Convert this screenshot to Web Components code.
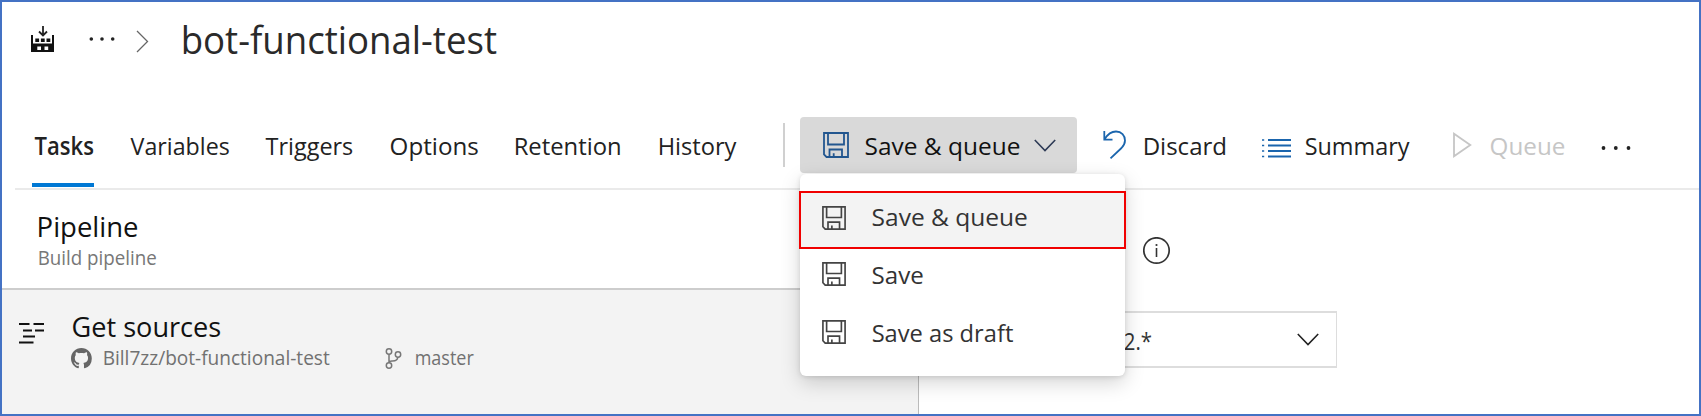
<!DOCTYPE html>
<html lang="en">
<head>
<meta charset="utf-8">
<title>bot-functional-test</title>
<style>
html,body{margin:0;height:100%;background:#fff;overflow:hidden}
body{font-family:"Open Sans","Noto Sans",sans-serif;color:#222}
</style>
</head>
<body>
<pipeline-editor></pipeline-editor>
<script>
const make=(name,html,setup)=>customElements.define(name,class extends HTMLElement{
  connectedCallback(){
    if(this.shadowRoot)return;
    const root=this.attachShadow({mode:'open'});
    const t=document.createElement('template');
    t.innerHTML=typeof html==='function'?html(this):html;
    root.append(t.content.cloneNode(true));
    if(setup)setup(this,root);
  }
});

// Label whose ink is exactly `w` pixels wide.
const pen=document.createElement('canvas').getContext('2d');
make('fit-label',`<style>:host{display:block;flex:none;white-space:pre}span{display:inline-block;transform-origin:0 50%;line-height:inherit}</style><span><slot></slot></span>`,(el,root)=>{
  const w=+el.getAttribute('w'),size=+el.getAttribute('size')||24.5,weight=el.getAttribute('weight')||400;
  const drop=el.classList.contains('lift')||el.slot==='repo'||el.slot==='branch'?0:1;
  el.style.cssText+=`;width:${w}px;height:40px;line-height:40px;font-size:${size}px;font-weight:${weight}`;
  pen.font=`${weight} ${size}px "Open Sans","Noto Sans",sans-serif`;
  const m=pen.measureText(el.textContent);
  const k=w/(m.actualBoundingBoxRight+m.actualBoundingBoxLeft);
  root.querySelector('span').style.transform=`translate(${m.actualBoundingBoxLeft*k+.6}px,${drop}px) scaleX(${k})`;
});

const icons={
  build:[23,26,`<path d="M12 0v9M8 5.500l4 4 4-4" fill="none" stroke="#222" stroke-width="1.800"/><path fill="#111" fill-rule="evenodd" d="M0 9h2v8.500h19V9h2v17H0zM6.300 20.500V24H10v-3.500zM13.500 20.500V24h3.700v-3.500z"/><path fill="#111" d="M4.300 12.500h3.800v3.500H4.300zM9.900 12.500h3.800v3.500h-3.800zM15.500 12.500h3.800v3.500h-3.800z"/>`],
  dots:[30,6,`<g fill="#222"><circle cx="2.500" cy="3" r="1.900"/><circle cx="14.800" cy="3" r="1.900"/><circle cx="27.500" cy="3" r="1.900"/></g>`],
  more:[26,6,`<g fill="#222"><circle cx="2.300" cy="3" r="1.800"/><circle cx="13" cy="3" r="1.800"/><circle cx="23.700" cy="3" r="1.800"/></g>`],
  crumb:[13,23,`<path d="M1 1l10.500 10.500L1 22" fill="none" stroke="#666" stroke-width="1.300"/>`],
  save:[26,26,`<g fill="none" stroke="currentColor" stroke-width="1.800"><path d="M1 1h24v24H3.500L1 22.500z"/><path d="M5 1v11.500h16V1M6.500 25v-7.500h12.500V25M10.700 25v-3.800"/></g>`],
  down:[22,13,`<path d="M.8 1L11 11.500 21.200 1" fill="none" stroke="currentColor" stroke-width="1.600"/>`],
  undo:[23,29,`<path d="M1.300 1v8.700H9.500M1.500 9.300C4.500 4.500 8 1.500 13 1.500c5.500 0 9 3.800 9 9 0 3-1.200 5-3.500 7.500L7.500 28.300" fill="none" stroke="#1a65ad" stroke-width="1.800"/>`],
  list:[29,20,`<g stroke="#1a65ad" stroke-width="1.800"><path d="M6 2h23M6 7.500h23M6 13h23M6 18.500h23"/><path stroke-width="1.500" d="M0 2h2.200M0 7.500h2.200M0 13h2.200M0 18.500h2.200"/></g>`],
  play:[19,26,`<path d="M1 1.700v22.600L17.300 13z" fill="none" stroke="#c6c6c6" stroke-width="1.800"/>`],
  source:[26,22,`<path d="M0 2h10.500M14.500 2h10.500M4 8.500h9M16 8.500h9M4 14.500h12M0 20.500h14.500" stroke="#111" stroke-width="2"/>`],
  github:[21,21,`<path transform="scale(1.300)" fill="#666" d="M8 0C3.580 0 0 3.580 0 8c0 3.540 2.290 6.530 5.470 7.590.4.070.55-.17.55-.38 0-.19-.01-.82-.01-1.490-2.010.37-2.530-.49-2.690-.94-.09-.23-.48-.94-.82-1.130-.28-.15-.68-.52-.01-.53.63-.01 1.080.58 1.230.82.72 1.210 1.870.87 2.330.66.07-.52.28-.87.51-1.070-1.780-.2-3.640-.89-3.640-3.950 0-.87.31-1.590.82-2.150-.08-.2-.36-1.020.08-2.120 0 0 .67-.21 2.200.82.64-.18 1.320-.27 2-.27s1.360.09 2 .27c1.530-1.040 2.200-.82 2.200-.82.44 1.100.16 1.920.08 2.120.51.56.82 1.270.82 2.150 0 3.070-1.870 3.750-3.650 3.950.29.25.54.73.54 1.480 0 1.070-.01 1.930-.01 2.200 0 .21.15.46.55.38A8.010 8.010 0 0 0 16 8c0-4.420-3.580-8-8-8z"/>`],
  branch:[17,21,`<g fill="none" stroke="#777" stroke-width="1.500"><circle cx="4" cy="3.500" r="2.700"/><circle cx="13" cy="6.500" r="2.700"/><circle cx="4" cy="17.500" r="2.700"/><path d="M4 6.200v8.600M12.800 9.200c-.3 4-3.800 3.700-5.800 3.800-2 .1-3 .9-3 2"/></g>`],
  info:[28,28,`<circle cx="13.500" cy="13.500" r="12.700" fill="none" stroke="#333" stroke-width="1.700"/><path d="M13.500 11v9" stroke="#333" stroke-width="1.600"/><circle cx="13.500" cy="8" r="1.100" fill="#333"/>`]
};
make('ui-icon',el=>{
  const [w,h,body]=icons[el.getAttribute('name')];
  const W=el.getAttribute('size')||w,H=el.getAttribute('size')||h;
  return `<style>:host{display:block;flex:none}svg{display:block}</style><svg width="${W}" height="${H}" viewBox="0 0 ${w} ${h}">${body}</svg>`;
});

make('page-header',`<style>
:host{display:flex;height:77px;align-items:center;padding-left:29px;box-sizing:border-box;color:#2a2a2a}
.build{margin-top:-3px}.dots{margin:-3px 21px 0 34.500px}.crumb{margin:1px 34.600px 0 0}
</style><ui-icon class="build" name="build"></ui-icon><ui-icon class="dots" name="more"></ui-icon><ui-icon class="crumb" name="crumb"></ui-icon><slot></slot>`);

make('tab-item',`<style>
:host{display:flex;height:84px;align-items:center;position:relative;margin-right:var(--gap)}
:host([active])::after{content:"";position:absolute;left:-2px;right:-1.500px;bottom:0;height:4px;background:#0078d4}
</style><slot></slot>`);

make('tool-bar',`<style>
:host{display:flex;height:86px;align-items:center;padding-left:19px;margin-left:13px;border-bottom:2px solid #eaeaea}
</style><slot></slot>`);

make('split-button',`<style>
:host{display:flex;align-items:center;box-sizing:border-box;width:277px;height:56px;background:#d9d9d9;border-radius:4px;padding-left:22.500px;color:#111;position:relative;margin-left:15px}
.save{color:#22568f;margin:-1px 16.500px 0 0}.down{margin:1px 0 0 15px;color:#2d3a55}
::slotted(menu-list){position:absolute;left:0;top:57px;z-index:5}
</style><ui-icon class="save" name="save"></ui-icon><slot></slot><ui-icon class="down" name="down"></ui-icon><slot name="menu"></slot>`);

make('menu-list',`<style>
:host{display:block;width:325px;height:202px;padding-top:17px;box-sizing:border-box;background:#fff;border-radius:6px;box-shadow:0 7px 20px rgba(0,0,0,.17),0 1px 5px rgba(0,0,0,.12)}
</style><slot></slot>`);

make('menu-entry',`<style>
:host{display:flex;align-items:center;box-sizing:border-box;height:58px;padding-left:22px;color:#333}
:host([selected]){background:#f3f3f3;border:2px solid #f00000;margin:0 -1px;padding-left:21px}
ui-icon{margin:-8px 26px 0 0;color:#444}
:host([selected]) ui-icon{margin-top:-5px}
</style><ui-icon name="save" size="24"></ui-icon><slot></slot>`);

make('pipeline-row',`<style>
:host{display:block;height:100px;box-sizing:border-box;padding:16px 0 0 36px;border-bottom:2px solid #cdcdcd;color:#111}
.sub{margin-top:-9px;color:#777}
</style><slot></slot><div class="sub"><slot name="sub"></slot></div>`);

make('source-row',`<style>
:host{display:flex;box-sizing:border-box;background:#f3f3f3;border-right:1px solid #bbb;height:122px;color:#111;padding-left:17px}
.lead{margin:32px 27px 0 0}.body{padding-top:16px}.sub{display:flex;align-items:center;color:#717171;margin-top:-8px}
.gh{margin:0 11px 0 -1px}.br{margin:0 13px 0 56px}
</style><ui-icon class="lead" name="source"></ui-icon><div class="body"><slot></slot><div class="sub"><ui-icon class="gh" name="github"></ui-icon><slot name="repo"></slot><ui-icon class="br" name="branch"></ui-icon><slot name="branch"></slot></div></div>`);

make('version-select',`<style>
:host{display:flex;align-items:center;box-sizing:border-box;width:236px;height:57px;border:2px solid #ddd;border-right-width:1px;padding-left:20.500px;color:#333}
ui-icon{margin:0 0 0 auto;padding-right:17px;color:#222}
</style><slot></slot><ui-icon name="down"></ui-icon>`);

make('detail-pane',`<style>
:host{display:block;padding:47px 0 0 182px}ui-icon{margin:0 0 46px 41.500px}
</style><ui-icon name="info"></ui-icon><slot></slot>`);

make('pipeline-editor',`<style>
:host{display:block;box-sizing:border-box;width:1701px;height:416px;border:2px solid #4472c4;background:#fff}
.rule{width:2px;height:44px;background:#d0d0d0}
page-header{margin-bottom:23px}
.cols{display:grid;grid-template-columns:917px 1fr}
source-row{height:124px}
.undo{margin:-2px 18px 0 26px}.list{margin:6px 14.500px 0 37px}.play{margin:-1px 18px 0 43px}.more{margin:5px 0 0 37px}
.muted{color:#c6c6c6}.title{margin-top:-4px}.lift{margin-top:-7px}
</style>
<page-header><fit-label class="title" w="313" size="37.500">bot-functional-test</fit-label></page-header>
<tool-bar>
<tab-item active style="--gap:37px"><fit-label w="58.500" weight="600">Tasks</fit-label></tab-item>
<tab-item style="--gap:37px"><fit-label w="98.500">Variables</fit-label></tab-item>
<tab-item style="--gap:37.500px"><fit-label w="87">Triggers</fit-label></tab-item>
<tab-item style="--gap:38px"><fit-label w="87.500">Options</fit-label></tab-item>
<tab-item style="--gap:38.500px"><fit-label w="105">Retention</fit-label></tab-item>
<tab-item style="--gap:47px"><fit-label w="77.500">History</fit-label></tab-item>
<div class="rule"></div>
<split-button><fit-label w="154">Save &amp; queue</fit-label>
<menu-list slot="menu">
<menu-entry selected><fit-label class="lift" w="154.500">Save &amp; queue</fit-label></menu-entry>
<menu-entry><fit-label class="lift" w="50.500">Save</fit-label></menu-entry>
<menu-entry><fit-label class="lift" w="141">Save as draft</fit-label></menu-entry>
</menu-list></split-button>
<ui-icon class="undo" name="undo"></ui-icon><fit-label w="80.500">Discard</fit-label>
<ui-icon class="list" name="list"></ui-icon><fit-label w="104.500">Summary</fit-label>
<ui-icon class="play" name="play"></ui-icon><fit-label class="muted" w="74">Queue</fit-label>
<ui-icon class="more" name="dots"></ui-icon>
</tool-bar>
<div class="cols"><div>
<pipeline-row><fit-label w="98.500" size="27.500">Pipeline</fit-label><fit-label slot="sub" w="118" size="20">Build pipeline</fit-label></pipeline-row>
<source-row><fit-label w="147.500" size="27.500">Get sources</fit-label><fit-label slot="repo" w="226" size="20">Bill7zz/bot-functional-test</fit-label><fit-label slot="branch" w="58" size="20">master</fit-label></source-row>
</div>
<detail-pane><version-select><fit-label w="27">2.*</fit-label></version-select></detail-pane></div>`);
</script>
</body>
</html>
